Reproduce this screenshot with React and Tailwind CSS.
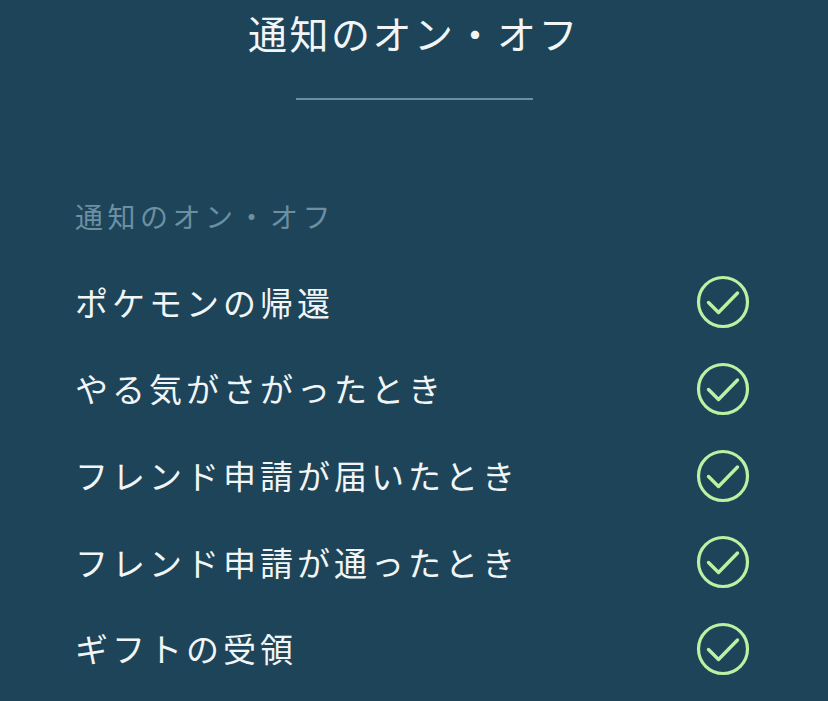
const items = [
  "ポケモンの帰還",
  "やる気がさがったとき",
  "フレンド申請が届いたとき",
  "フレンド申請が通ったとき",
  "ギフトの受領",
];

function CheckCircle() {
  return (
    <svg width="54" height="54" viewBox="0 0 54 54" fill="none">
      <circle cx="27" cy="27" r="24.5" stroke="#b8f2a2" strokeWidth="3.2" />
      <path
        d="M12.5 27.5 L22.5 37.5 L41.5 18"
        stroke="#b8f2a2"
        strokeWidth="3.4"
        strokeLinecap="round"
        strokeLinejoin="round"
      />
    </svg>
  );
}

export default function App() {
  return (
    <div
      className="h-[701px] w-full overflow-hidden bg-[#1d4458] text-[#f1f5f6]"
      style={{ fontFamily: '"Noto Sans CJK JP", "Noto Sans", sans-serif' }}
    >
      <h1 className="pt-[4px] text-center text-[39px] leading-[56px] tracking-[2.5px]">
        通知のオン・オフ
      </h1>
      <div className="mx-auto mt-[38px] h-[2px] w-[237px] bg-[#6b8ea0]" />

      <p className="mt-[98px] pl-[75px] text-[28px] leading-[36px] tracking-[4.5px] text-[#6c8fa2]">
        通知のオン・オフ
      </p>

      <ul className="mt-[25px] pl-[75px] pr-[78px]">
        {items.map((label) => (
          <li key={label} className="flex h-[86.7px] items-center justify-between">
            <span className="text-[33px] tracking-[4px]">{label}</span>
            <CheckCircle />
          </li>
        ))}
      </ul>
    </div>
  );
}
